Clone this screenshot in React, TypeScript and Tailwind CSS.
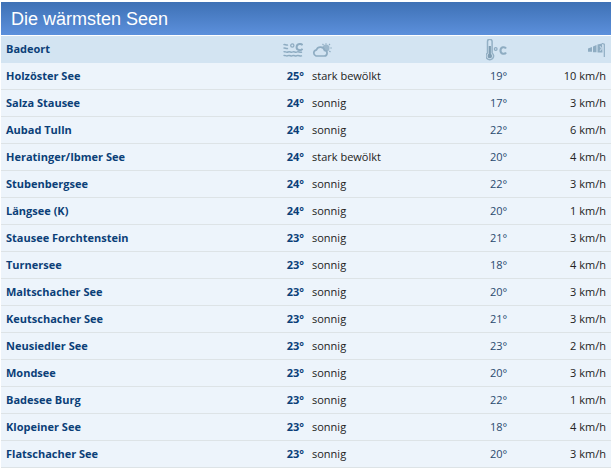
const rows: [string, string, string, string, string][] = [
  ["Holzöster See", "25°", "stark bewölkt", "19°", "10 km/h"],
  ["Salza Stausee", "24°", "sonnig", "17°", "3 km/h"],
  ["Aubad Tulln", "24°", "sonnig", "22°", "6 km/h"],
  ["Heratinger/Ibmer See", "24°", "stark bewölkt", "20°", "4 km/h"],
  ["Stubenbergsee", "24°", "sonnig", "22°", "3 km/h"],
  ["Längsee (K)", "24°", "sonnig", "20°", "1 km/h"],
  ["Stausee Forchtenstein", "23°", "sonnig", "21°", "3 km/h"],
  ["Turnersee", "23°", "sonnig", "18°", "4 km/h"],
  ["Maltschacher See", "23°", "sonnig", "20°", "3 km/h"],
  ["Keutschacher See", "23°", "sonnig", "21°", "3 km/h"],
  ["Neusiedler See", "23°", "sonnig", "23°", "2 km/h"],
  ["Mondsee", "23°", "sonnig", "20°", "3 km/h"],
  ["Badesee Burg", "23°", "sonnig", "22°", "1 km/h"],
  ["Klopeiner See", "23°", "sonnig", "18°", "4 km/h"],
  ["Flatschacher See", "23°", "sonnig", "20°", "3 km/h"],
];

function WaterIcon() {
  return (
    <svg width="20" height="14" viewBox="0 0 20 14" fill="none" stroke="#8eacc2" strokeWidth="1.500">
      <circle cx="9.300" cy="2.500" r="1.600" strokeWidth="1.300" />
      <path d="M19.500 2.200C18.500.4 13.800.4 13.600 4c-.2 3.600 4.700 4 5.900 1.800" strokeWidth="2" />
      <path d="M.5 1.800c1.500-1.200 2.500 1 4.500 0M.5 5.300c1.500-1.200 2.500 1 4.500 0M.5 9c1.500-1.200 2.500 1 4.500 0s3 1 4.500 0s3 1 4.500 0s3 1 5 0M.5 12.700c1.500-1.200 2.500 1 4.500 0s3 1 4.500 0s3 1 4.500 0s3 1 5 0" />
    </svg>
  );
}

function CloudIcon() {
  return (
    <svg width="20" height="14" viewBox="0 0 20 14" fill="none" stroke="#8eacc2" strokeWidth="1.700">
      <circle cx="14" cy="5" r="3.500" fill="#9db8cc" stroke="none" />
      <path d="M14 .2v1.200M18 1l-1 1M19.800 5h-1.500M18.500 9l-1.200-1M10.500 1l1 1" strokeWidth="1.100" />
      <path d="M4 13h8a2.800 2.800 0 0 0 .5-5.600a4.200 4.200 0 0 0-8-.6A3.200 3.200 0 0 0 4 13z" fill="#d3e4f2" />
    </svg>
  );
}

function ThermoIcon() {
  return (
    <svg width="21" height="22" viewBox="0 0 21 22" fill="none">
      <path d="M1.500 2.500a2.300 2.300 0 0 1 4.600 0v11.500a3.800 3.800 0 1 1-4.600 0z" stroke="#93b0c5" strokeWidth="1.500" />
      <path d="M3.800 7v10" stroke="#7f9db3" strokeWidth="2.200" />
      <circle cx="3.800" cy="17" r="2.300" fill="#7f9db3" />
      <circle cx="9.700" cy="10" r="1.400" stroke="#8eacc2" strokeWidth="1.200" />
      <path d="M20 9.500c-1.100-2-5.500-1.800-5.500 2s4.400 4 5.500 2" stroke="#8eacc2" strokeWidth="2.100" />
    </svg>
  );
}

function WindIcon() {
  return (
    <svg width="17" height="14" viewBox="0 0 17 14" fill="none">
      <path d="M0 5.500L4 4v4.800H0zM5 3.600L8.500 2v7.300H5zM9.500 1.600L14 .5l.5 9h-5z" fill="#8eacc2" />
      <path d="M11.800 3.500a1.500 2 0 1 1 0 4" stroke="#d3e4f2" strokeWidth="1" />
      <path d="M14 .5l2.300.8V14" stroke="#8eacc2" strokeWidth="1.200" />
    </svg>
  );
}

export default function App() {
  return (
    <div className="w-[614px] h-[472px] overflow-hidden bg-white pl-px pt-0.5 font-['Open_Sans',sans-serif] text-[11px]">
      <div className="w-[610px]">
        <h1 className="h-[33px] pl-[10px] pt-[5px] bg-gradient-to-b from-[#3e71b5] to-[#5c90dc] text-white text-[18px] leading-[24px] font-normal font-['Liberation_Sans',sans-serif]">
          Die wärmsten Seen
        </h1>
        <div className="grid grid-cols-[304px_170px_1fr_90px] mt-px h-[27px] items-center bg-[#d3e4f2] text-[#0b3f78] font-bold">
          <div className="flex items-center justify-between pl-[5px] pr-[2px]">
            <span>Badeort</span>
            <WaterIcon />
          </div>
          <div className="pl-[7px]"><CloudIcon /></div>
          <div className="pl-[11px]"><ThermoIcon /></div>
          <div className="flex justify-end pr-[6px]"><WindIcon /></div>
        </div>
        {rows.map((r) => (
          <div key={r[0]} className="grid grid-cols-[304px_170px_1fr_90px] h-[27px] items-center bg-[#edf4fb] border-b border-[#dde3e6]">
            <div className="flex items-center justify-between pl-[5px] pr-px font-bold text-[#0b3f78]">
              <span>{r[0]}</span>
              <span>{r[1]}</span>
            </div>
            <div className="pl-[7px] text-[#222]">{r[2]}</div>
            <div className="pl-[15px] text-[#2a4a6e]">{r[3]}</div>
            <div className="text-right pr-[5px] text-[#222]">{r[4]}</div>
          </div>
        ))}
      </div>
    </div>
  );
}
